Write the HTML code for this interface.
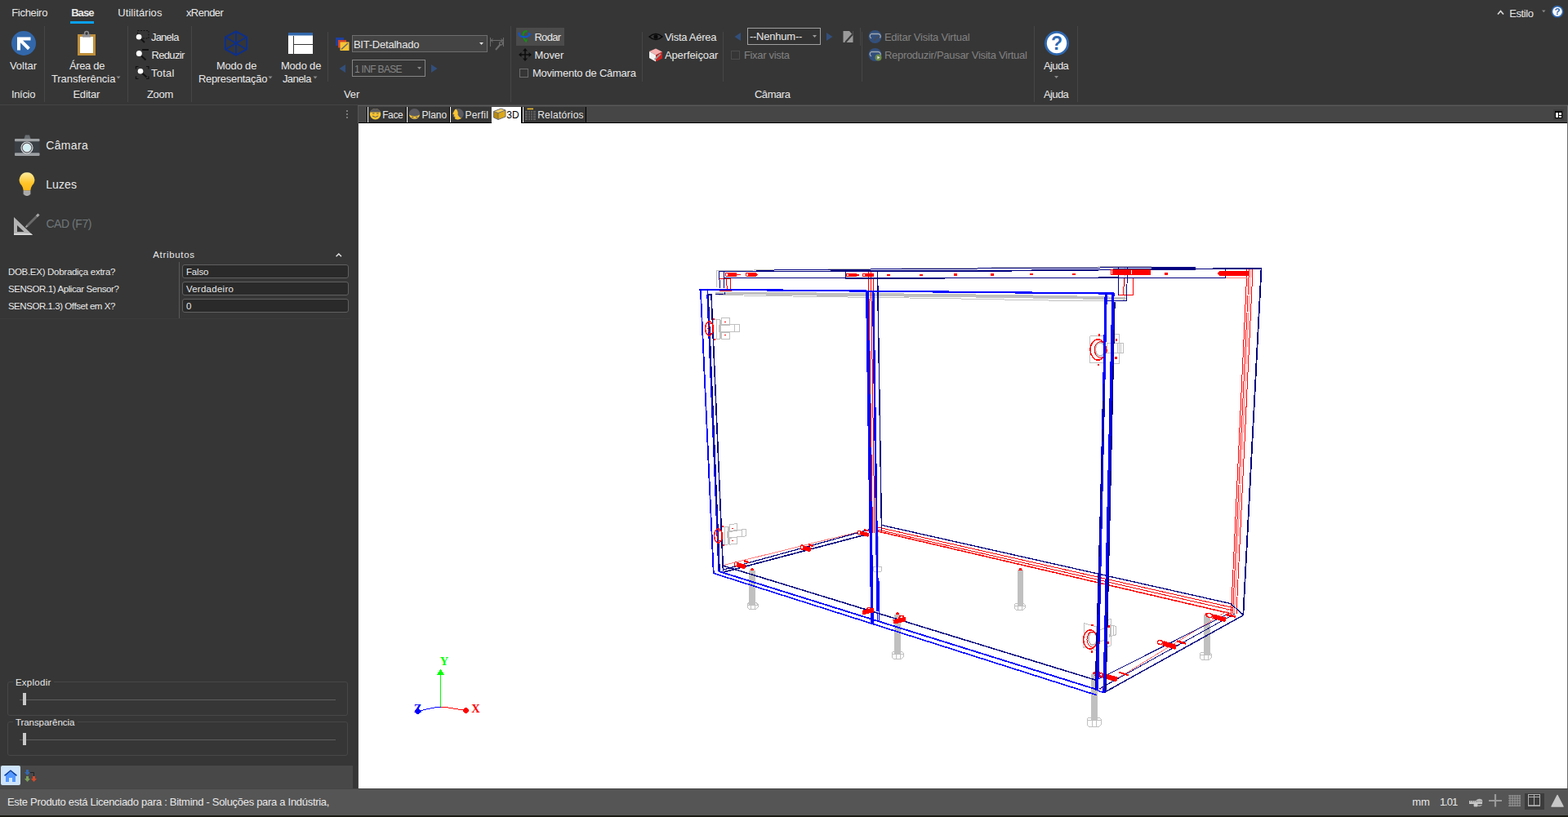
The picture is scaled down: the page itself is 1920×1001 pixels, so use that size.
<!DOCTYPE html>
<html lang="pt"><head><meta charset="utf-8"><title>BIT-Detalhado - 3D</title>
<style>
html,body{margin:0;padding:0;}
body{width:1920px;height:1001px;overflow:hidden;background:#363636;font-family:"Liberation Sans", sans-serif;font-size:13px;color:#e8e8e8;position:relative;}
.t{position:absolute;white-space:nowrap;line-height:1.25;height:1.25em;}
.a{position:absolute;}
.rg{position:absolute;left:0;top:0;width:0;height:0;}
.sep{position:absolute;width:1px;background:#464646;}
.inp{position:absolute;left:223px;width:202px;height:15px;border:1px solid #606060;border-radius:3px;background:#2a2a2a;}
.grp{position:absolute;left:9px;width:415px;height:40px;border:1px solid #474747;border-radius:3px;}
.track{position:absolute;left:24px;width:387px;height:1px;background:#5e5e5e;}
.thumb{position:absolute;left:28px;width:4px;height:15px;background:#c8c8c8;}
.tab{position:absolute;top:131px;height:19px;background:#363636;border-left:1px solid #fff;box-shadow:-1px 0 0 #000;}
</style></head>
<body>
<header id="ribbon" class="rg">
<div class="a" style="left:86px;top:26px;width:29px;height:3px;background:#0aa1ee"></div>
<div class="sep" style="left:54px;top:32px;height:93px"></div>
<div class="sep" style="left:156px;top:32px;height:93px"></div>
<div class="sep" style="left:234px;top:32px;height:93px"></div>
<div class="sep" style="left:401px;top:39px;height:61px"></div>
<div class="sep" style="left:625px;top:32px;height:93px"></div>
<div class="sep" style="left:786px;top:39px;height:61px"></div>
<div class="sep" style="left:885px;top:39px;height:61px"></div>
<div class="sep" style="left:1055px;top:39px;height:61px"></div>
<div class="sep" style="left:1266px;top:32px;height:93px"></div>
<div class="sep" style="left:1319px;top:32px;height:93px"></div>
<div class="a" style="left:632px;top:34px;width:59px;height:22px;background:#4b4b4b"></div>
<div class="a" style="left:431px;top:43px;width:164px;height:19px;border:1px solid #6e6e6e;background:#444"></div>
<div class="a" style="left:431px;top:73px;width:88px;height:19px;border:1px solid #858585;background:#363636"></div>
<div class="a" style="left:915px;top:34px;width:88px;height:19px;border:1px solid #a0a0a0;background:#333"></div>
<div class="a" style="left:636px;top:84px;width:9px;height:9px;border:1px solid #6c6c6c"></div>
<div class="a" style="left:895px;top:62px;width:9px;height:9px;border:1px solid #4c4c4c"></div>
<svg class="a" style="left:0px;top:0px" width="1920" height="128" viewBox="0 0 1920 128">
<circle cx="29" cy="53" r="15" fill="#3268ab"/>
<path d="M21 45.5 H37.5 V49.5 H28 L36.8 58.3 L34 61.2 L25 52.2 V61.5 H21 Z" fill="#fff"/>
<rect x="95" y="42" width="22" height="26" fill="#bf8f3a"/>
<rect x="98" y="45" width="16" height="20" fill="#fff"/>
<rect x="101" y="41.8" width="10" height="3.8" fill="#8e8e93"/><circle cx="106" cy="41" r="2.4" fill="#363636" stroke="#8e8e93" stroke-width="1.5"/>
<rect x="168.5" y="37.5" width="13.5" height="9.5" fill="none" stroke="#111" stroke-width="1" stroke-dasharray="2 1.5"/>
<path d="M172.5 47.5 L177 52" stroke="#111" stroke-width="2"/><circle cx="170.1" cy="45.3" r="3.3" fill="#fff"/>
<rect x="174" y="60" width="8" height="2" fill="#111"/>
<path d="M173 68.5 L178.5 73.5" stroke="#111" stroke-width="2"/><circle cx="170.3" cy="65.4" r="3.5" fill="#fff"/>
<path d="M166.5 84.5 V81.5 H169.5 M179 81.5 H182 V84.5 M182 93.5 V96.5 H179 M169.5 96.5 H166.5 V93.5" fill="none" stroke="#111" stroke-width="1.2"/>
<path d="M174 89.5 L179.5 94.5" stroke="#111" stroke-width="2"/><circle cx="172" cy="87.2" r="3.3" fill="#fff"/>
<path d="M289 38.5 L302 45.5 V60.5 L289 67.5 L276 60.5 V45.5 Z M289 38.5 V67.5 M276 45.5 L302 60.5 M302 45.5 L276 60.5" fill="none" stroke="#0c2f8c" stroke-width="2"/>
<rect x="353" y="40" width="30" height="26" fill="#fff"/><rect x="353" y="40" width="30" height="3.5" fill="#3268ab"/>
<path d="M359.5 43.5 V66 M359.5 54.5 H383" stroke="#363636" stroke-width="1" fill="none" shape-rendering="crispEdges"/>
<path d="M142.5 93.5 h5 l-2.5 3 z" fill="#8a8a8a"/>
<path d="M328.5 93.5 h5 l-2.5 3 z" fill="#8a8a8a"/>
<path d="M383.5 93.5 h5 l-2.5 3 z" fill="#8a8a8a"/>
<path d="M1291 93 h5 l-2.5 3 z" fill="#8a8a8a"/>
<rect x="411" y="46" width="10" height="10" fill="#1e3f9e"/><rect x="414" y="49" width="10" height="9.5" fill="#d1452a"/><rect x="416.5" y="51.5" width="11" height="10.5" fill="#f8c633"/>
<path d="M418 60.5 L426 53" stroke="#6b6b6b" stroke-width="1.6"/>
<path d="M587 52 h5 l-2.5 3 z" fill="#e0e0e0"/>
<path d="M511 82 h5 l-2.5 3 z" fill="#8a8a8a"/>
<path d="M995 43 h5 l-2.5 3 z" fill="#9a9a9a"/>
<path d="M600.5 46 V57 M616.5 46 V57 M601 49.5 H616 M603.5 47.5 L601 49.5 L603.5 51.5 M613.5 47.5 L616 49.5 L613.5 51.5" fill="none" stroke="#6c6c6c" stroke-width="1"/>
<path d="M607 61 L613 54" stroke="#6c6c6c" stroke-width="2"/><circle cx="613.5" cy="53" r="2" fill="none" stroke="#6c6c6c" stroke-width="1.2"/>
<polygon points="423 79 415.5 84 423 89" fill="#324f7c"/>
<polygon points="528 79 535.5 84 528 89" fill="#324f7c"/>
<polygon points="907 40 899.5 45 907 50" fill="#324f7c"/>
<polygon points="1012 40 1019.5 45 1012 50" fill="#324f7c"/>
<path d="M645.5 38.2 Q640.5 38.2 640.3 43 Q640.5 47.5 644 49.2" fill="none" stroke="#178c14" stroke-width="2.2"/><path d="M641.8 49.3 L646.2 47.8 L644.3 52.6 Z" fill="#178c14"/>
<path d="M636 39.8 Q634.5 45 641.5 45.3 Q647 45.2 648 42.8" fill="none" stroke="#0f55c8" stroke-width="2.2"/><path d="M646.5 39.6 L650.8 42 L647.5 44.4 Z" fill="#0f55c8"/>
<path d="M643 60 V74 M636 67 H650" stroke="#0e0e0e" stroke-width="1.6" fill="none"/>
<path d="M643 59 L646 62.5 H640 Z M643 75 L646 71.5 H640 Z M635 67 L638.5 64 V70 Z M651 67 L647.5 64 V70 Z" fill="#0e0e0e"/>
<path d="M795 45 Q803 38 811 45 Q803 52 795 45 Z" fill="none" stroke="#0a0a0a" stroke-width="1.5"/><circle cx="803" cy="45" r="2.6" fill="#0a0a0a"/>
<path d="M795 63 L803 59.5 L811 63.5 L803 67.5 Z" fill="#f4b0b0"/><path d="M795 63 L803 67.5 V75.5 L795 71 Z" fill="#f2f2f2"/><path d="M803 67.5 L811 63.5 V71.5 L803 75.5 Z" fill="#cc2020"/>
<path d="M801.5 73 L809 66" stroke="#9a9a9a" stroke-width="1.8"/>
<rect x="1032.5" y="38" width="12" height="14" fill="#9a9a9a"/><path d="M1035 52 L1044 42" stroke="#3a3a3a" stroke-width="2"/><path d="M1035 52 L1044 42" stroke="#9a9a9a" stroke-width="0" />
<path d="M1040 38 H1044.5 V43 Z" fill="#363636"/>
<rect x="1053" y="34" width="1" height="22" fill="#464646"/>
<circle cx="1071.5" cy="45" r="8" fill="#324f7c"/>
<path d="M1067 47 a3 3 0 0 1 0 -5.5 h8.5 a3 3 0 0 1 2 5" fill="none" stroke="#a0a8b0" stroke-width="1.3"/>
<circle cx="1071.5" cy="67" r="8" fill="#324f7c"/>
<path d="M1067 69 a3 3 0 0 1 0 -5.5 h8.5 a3 3 0 0 1 2 5" fill="none" stroke="#a0a8b0" stroke-width="1.3"/>
<path d="M1070 50 L1076 44" stroke="#4a4a4a" stroke-width="1.6"/>
<circle cx="1075.5" cy="70.5" r="4" fill="#6a8a4a"/><path d="M1074.3 68.5 L1077.6 70.5 L1074.3 72.5 Z" fill="#e0e0e0"/>
<circle cx="1294" cy="53" r="13.6" fill="#fff" stroke="#2f68b0" stroke-width="2.8"/>
<text x="1294" y="61" text-anchor="middle" font-family="Liberation Sans, sans-serif" font-weight="700" font-size="23" fill="#2f68b0">?</text>
<circle cx="1907" cy="14.2" r="6.6" fill="#fff" stroke="#2f68b0" stroke-width="1.6"/>
<text x="1907" y="18.3" text-anchor="middle" font-family="Liberation Sans, sans-serif" font-weight="700" font-size="11.5" fill="#2f68b0">?</text>
<path d="M1834 17.5 L1837.5 13.5 L1841 17.5" fill="none" stroke="#d8d8d8" stroke-width="1.7"/>
<path d="M1888 12.5 h4.5 l-2.25 2.7 z" fill="#8a8a8a"/>
</svg>
<span class="t" id="t0" style="left:14.2px;top:8.0px;font-size:13px;color:#e8e8e8;letter-spacing:-0.293px;">Ficheiro</span>
<span class="t" id="t1" style="left:87.2px;top:8.0px;font-size:13px;color:#e8e8e8;font-weight:700;letter-spacing:-0.959px;">Base</span>
<span class="t" id="t2" style="left:144.3px;top:8.0px;font-size:13px;color:#e8e8e8;letter-spacing:0.063px;">Utilitários</span>
<span class="t" id="t3" style="left:227.9px;top:8.0px;font-size:13px;color:#e8e8e8;letter-spacing:-0.523px;">xRender</span>
<span class="t" id="t4" style="left:1848.2px;top:9.0px;font-size:13px;color:#e8e8e8;letter-spacing:-0.379px;">Estilo</span>
<span class="t" id="t5" style="left:11.9px;top:73.0px;font-size:13px;color:#e8e8e8;letter-spacing:0.010px;">Voltar</span>
<span class="t" id="t6" style="left:84.9px;top:73.0px;font-size:13px;color:#e8e8e8;letter-spacing:-0.341px;">Área de</span>
<span class="t" id="t7" style="left:62.9px;top:89.0px;font-size:13px;color:#e8e8e8;letter-spacing:-0.042px;">Transferência</span>
<span class="t" id="t8" style="left:264.9px;top:73.0px;font-size:13px;color:#e8e8e8;letter-spacing:-0.182px;">Modo de</span>
<span class="t" id="t9" style="left:242.9px;top:89.0px;font-size:13px;color:#e8e8e8;letter-spacing:-0.306px;">Representação</span>
<span class="t" id="t10" style="left:343.9px;top:73.0px;font-size:13px;color:#e8e8e8;letter-spacing:-0.182px;">Modo de</span>
<span class="t" id="t11" style="left:345.9px;top:89.0px;font-size:13px;color:#e8e8e8;letter-spacing:-0.562px;">Janela</span>
<span class="t" id="t12" style="left:1277.9px;top:73.0px;font-size:13px;color:#e8e8e8;letter-spacing:-0.587px;">Ajuda</span>
<span class="t" id="t13" style="left:13.9px;top:108.0px;font-size:13px;color:#e8e8e8;letter-spacing:-0.316px;">Início</span>
<span class="t" id="t14" style="left:89.4px;top:108.0px;font-size:13px;color:#e8e8e8;letter-spacing:-0.194px;">Editar</span>
<span class="t" id="t15" style="left:179.9px;top:108.0px;font-size:13px;color:#e8e8e8;letter-spacing:-0.245px;">Zoom</span>
<span class="t" id="t16" style="left:420.9px;top:108.0px;font-size:13px;color:#e8e8e8;letter-spacing:-0.008px;">Ver</span>
<span class="t" id="t17" style="left:923.9px;top:108.0px;font-size:13px;color:#e8e8e8;letter-spacing:-0.430px;">Câmara</span>
<span class="t" id="t18" style="left:1277.9px;top:108.0px;font-size:13px;color:#e8e8e8;letter-spacing:-0.587px;">Ajuda</span>
<span class="t" id="t19" style="left:184.9px;top:38.0px;font-size:13px;color:#e8e8e8;letter-spacing:-0.762px;">Janela</span>
<span class="t" id="t20" style="left:185.4px;top:60.0px;font-size:13px;color:#e8e8e8;letter-spacing:-0.633px;">Reduzir</span>
<span class="t" id="t21" style="left:184.9px;top:82.0px;font-size:13px;color:#e8e8e8;letter-spacing:0.258px;">Total</span>
<span class="t" id="t22" style="left:432.9px;top:47.0px;font-size:13px;color:#e8e8e8;letter-spacing:-0.217px;">BIT-Detalhado</span>
<span class="t" id="t23" style="left:433.9px;top:77.5px;font-size:12px;color:#858585;letter-spacing:-0.665px;">1 INF BASE</span>
<span class="t" id="t24" style="left:654.4px;top:38.0px;font-size:13px;color:#e8e8e8;letter-spacing:-0.680px;">Rodar</span>
<span class="t" id="t25" style="left:654.4px;top:60.0px;font-size:13px;color:#e8e8e8;letter-spacing:-0.031px;">Mover</span>
<span class="t" id="t26" style="left:651.9px;top:82.0px;font-size:13px;color:#e8e8e8;letter-spacing:-0.250px;">Movimento de Câmara</span>
<span class="t" id="t27" style="left:813.9px;top:38.0px;font-size:13px;color:#e8e8e8;letter-spacing:-0.277px;">Vista Aérea</span>
<span class="t" id="t28" style="left:813.9px;top:60.0px;font-size:13px;color:#e8e8e8;letter-spacing:-0.098px;">Aperfeiçoar</span>
<span class="t" id="t29" style="left:917.9px;top:37.0px;font-size:13px;color:#e8e8e8;letter-spacing:-0.219px;">--Nenhum--</span>
<span class="t" id="t30" style="left:910.9px;top:60.0px;font-size:13px;color:#828282;letter-spacing:-0.313px;">Fixar vista</span>
<span class="t" id="t31" style="left:1082.9px;top:38.0px;font-size:13px;color:#828282;letter-spacing:-0.228px;">Editar Visita Virtual</span>
<span class="t" id="t32" style="left:1082.9px;top:60.0px;font-size:13px;color:#828282;letter-spacing:-0.286px;">Reproduzir/Pausar Visita Virtual</span>
</header>
<nav id="view-tabs" class="rg">
<div class="a" style="left:438px;top:129px;width:1482px;height:22px;background:#464646"></div>
<div class="a" style="left:438px;top:129px;width:1px;height:22px;background:#555"></div>
<div class="a" style="left:438px;top:129px;width:1482px;height:1px;background:#5a5a5a"></div>
<div class="a" style="left:439px;top:150px;width:1481px;height:1px;background:#000"></div>
<div class="tab" style="left:450px;top:131px;width:46px"></div>
<div class="tab" style="left:498px;top:131px;width:51px"></div>
<div class="tab" style="left:551px;top:131px;width:49px"></div>
<div class="tab" style="left:640px;top:131px;width:76px"></div>
<div class="a" style="left:602px;top:131px;width:36px;height:20px;background:#fff;border-right:2px solid #000;box-sizing:content-box"></div>
<div class="a" style="left:717px;top:131px;width:1px;height:19px;background:#000"></div>
<svg class="a" style="left:1902px;top:134px" width="13" height="13" viewBox="0 0 13 13" shape-rendering="crispEdges"><rect width="13" height="13" fill="#3e3e3e"/><rect x="2" y="2" width="9" height="9" fill="#000"/><rect x="3" y="4" width="3" height="6" fill="#fff"/><rect x="7" y="4" width="3" height="3" fill="#fff"/><rect x="7" y="8" width="3" height="2" fill="#fff"/></svg>
<div class="a" style="left:1919px;top:129px;width:1px;height:22px;background:#6a6a6a"></div>
<svg class="a" style="left:438px;top:129px" width="1482" height="22" viewBox="438 129 1482 22">
<circle cx="459.6" cy="139.8" r="6.7" fill="#fbc530"/><path d="M453.3 137.5 A6.7 6.7 0 0 1 465.9 137.5 Z" fill="#5a5a60"/>
<path d="M456 142 Q459.6 145 463.2 142" fill="none" stroke="#5a5a60" stroke-width="1"/><path d="M456 139 h2.5 M461 139 h2.5" stroke="#5a5a60" stroke-width="1"/>
<circle cx="507.5" cy="139.8" r="6.7" fill="#5a5a60"/><path d="M501 140.5 Q507.5 144.5 514 140.5 A6.7 6.7 0 0 1 501 140.5 Z" fill="#fbc530"/>
<path d="M504 143.5 h2.5 M509 143.5 h2.5" stroke="#5a5a60" stroke-width="1"/>
<circle cx="561" cy="139.8" r="6.7" fill="#5a5a60"/><path d="M558.5 133.6 Q561.5 137 560.5 140.5 Q562 144 565 145 Q561 147.5 557 145.5 L557.5 143 L555.5 142.5 L556.5 140.5 L554.3 139.5 L556.3 136 Q556.5 134 558.5 133.6 Z" fill="#fbc530"/>
<path d="M604.5 136.5 L613.5 133 L619 135 L610 138.5 Z" fill="#f5d060"/><path d="M604.5 136.5 L610 138.5 V146.5 L604.5 144 Z" fill="#b88a10"/><path d="M610 138.5 L619 135 V143 L610 146.5 Z" fill="#dca818"/>
<path d="M604.5 136.5 L613.5 133 L619 135 V143 L610 146.5 L604.5 144 Z M610 138.5 V146.5 M610 138.5 L619 135 M610 138.5 L604.5 136.5" fill="none" stroke="#6e6e78" stroke-width="1"/>
<rect x="645.5" y="132.6" width="7.5" height="1.6" fill="#f0bc30"/>
<path d="M643 136.5 h2.5 M647 136.5 h2 M650 136.5 h2 M653 136.5 h3 M643 138.5 h2.5 M647 138.5 h2 M650 138.5 h2 M653 138.5 h3 M643 140.5 h2.5 M647 140.5 h2 M650 140.5 h2 M653 140.5 h3 M643 142.5 h2.5 M647 142.5 h2 M650 142.5 h2 M653 142.5 h3 M643 144.5 h2.5 M647 144.5 h2 M650 144.5 h2 M653 144.5 h3 M643 146.5 h2.5 M647 146.5 h2 M650 146.5 h2 M653 146.5 h3" stroke="#707070" stroke-width="1" fill="none" shape-rendering="crispEdges"/>
</svg>
<span class="t" id="t33" style="left:468.2px;top:134.0px;font-size:12px;color:#e8e8e8;letter-spacing:-0.396px;">Face</span>
<span class="t" id="t34" style="left:516.6px;top:134.0px;font-size:12px;color:#e8e8e8;letter-spacing:-0.051px;">Plano</span>
<span class="t" id="t35" style="left:569.4px;top:134.0px;font-size:12px;color:#e8e8e8;letter-spacing:0.231px;">Perfil</span>
<span class="t" id="t36" style="left:620.2px;top:134.0px;font-size:12px;color:#000;letter-spacing:0.156px;">3D</span>
<span class="t" id="t37" style="left:658.2px;top:134.0px;font-size:12px;color:#e8e8e8;letter-spacing:0.263px;">Relatórios</span>
</nav>
<aside id="side-panel" class="rg">
<div class="a" style="left:0;top:128px;width:1920px;height:1px;background:#454545"></div>
<div class="a" style="left:438px;top:151px;width:1px;height:816px;background:#4a4a4a"></div>
<div class="a" style="left:424px;top:135px;width:2px;height:2px;background:#7a7a7a"></div>
<div class="a" style="left:424px;top:139px;width:2px;height:2px;background:#7a7a7a"></div>
<div class="a" style="left:424px;top:143px;width:2px;height:2px;background:#7a7a7a"></div>
<div class="inp" style="top:324px"></div>
<div class="inp" style="top:345px"></div>
<div class="inp" style="top:366px"></div>
<div class="sep" style="left:219px;top:321px;height:69px;background:#5a5a5a"></div>
<div class="a" style="left:0;top:390px;width:429px;height:1px;background:#3b3b3b"></div>
<div class="a" style="left:435px;top:152px;width:3px;height:786px;background:#343434"></div>
<svg class="a" style="left:410px;top:308px" width="10" height="8" viewBox="0 0 10 8"><path d="M1.6 6.3 L4.8 3 L8 6.3" fill="none" stroke="#e4e4e4" stroke-width="1.4"/></svg>
<div class="grp" style="top:835px"></div>
<div class="grp" style="top:884px"></div>
<div class="a" style="left:16px;top:830px;width:50px;height:12px;background:#363636"></div>
<div class="a" style="left:16px;top:879px;width:79px;height:12px;background:#363636"></div>
<div class="track" style="top:857px"></div><div class="thumb" style="top:849px"></div>
<div class="track" style="top:906px"></div><div class="thumb" style="top:898px"></div>
<div class="a" style="left:0;top:938px;width:432px;height:28px;background:#484848"></div>
<div class="a" style="left:1px;top:938px;width:24px;height:24px;background:#cde4fb;border-radius:2px"></div>
<svg class="a" style="left:0px;top:152px" width="438" height="815" viewBox="0 152 438 815">
<rect x="18" y="170" width="30.5" height="21" rx="1.5" fill="#3a3f45"/><rect x="18" y="170" width="30.5" height="3.2" rx="1" fill="#9da0a3"/><rect x="18" y="187.3" width="30.5" height="3.7" rx="1" fill="#9da0a3"/>
<path d="M29.5 170 L31 165.5 H36 L37.5 170 Z" fill="#6a6f74"/>
<circle cx="33" cy="181" r="7" fill="#50565c" stroke="#d8dadc" stroke-width="1.2"/><circle cx="33" cy="181" r="4.8" fill="#d4f0f4" stroke="#f4f4f4" stroke-width="1"/>
<defs><linearGradient id="bg1" x1="0" y1="0" x2="0" y2="1"><stop offset="0" stop-color="#ffeea0"/><stop offset="0.6" stop-color="#ffc428"/><stop offset="1" stop-color="#fbb818"/></linearGradient></defs>
<path d="M33 211.2 A9.2 9.2 0 0 1 39.5 227 Q37.5 230 37.3 233.5 H28.7 Q28.5 230 26.5 227 A9.2 9.2 0 0 1 33 211.2 Z" fill="url(#bg1)"/>
<path d="M28.7 233.5 H37.3 V238 Q33 242 28.7 238 Z" fill="#b8b8b8"/><path d="M28.7 235.5 H37.3 M28.7 237.5 H37.3" stroke="#8c8c8c" stroke-width="0.7"/>
<path d="M17 266 V288 H40 Z M21 276 V284 H29.5 Z" fill="#b4b4b4" fill-rule="evenodd"/><path d="M17 288 H40 L38 286 H17 Z" fill="#d8d8d8"/>
<path d="M33 277 L45.5 264.5" stroke="#6a6a6a" stroke-width="3"/><path d="M45 265 L47.5 262.5" stroke="#a8a8a8" stroke-width="3"/><path d="M31.5 278.5 L33.5 276.5" stroke="#9a9a9a" stroke-width="2"/>
<rect x="7" y="948" width="12" height="10" fill="#5599ff"/><path d="M6.5 950.5 L13 945 L19.5 950.5 V948.5 L13 945 Z" fill="#5599ff"/><path d="M7 950 L13 945.2 L19 950 Z" fill="#5599ff"/><rect x="11" y="953" width="4" height="5" fill="#cfe8ff"/>
<path d="M5.5 950.3 L13 944.2 L20.5 950.3" fill="none" stroke="#0b3fa0" stroke-width="1.5"/>
<path d="M36 946.5 H41.5 V951" fill="none" stroke="#222" stroke-width="1"/>
<path d="M32 943 h3 v3 h2 l-3.5 4 l-3.5 -4 h2 z" fill="#3568b0"/>
<path d="M32 951 h3 v3 h2 l-3.5 4 l-3.5 -4 h2 z" fill="#7a9e5c"/>
<path d="M40 951 h3 v3 h2 l-3.5 4 l-3.5 -4 h2 z" fill="#d4492a"/>
</svg>
<span class="t" id="t38" style="left:56.2px;top:170.0px;font-size:14px;color:#e8e8e8;letter-spacing:0.341px;">Câmara</span>
<span class="t" id="t39" style="left:56.2px;top:218.0px;font-size:14px;color:#e8e8e8;letter-spacing:0.085px;">Luzes</span>
<span class="t" id="t40" style="left:56.4px;top:266.0px;font-size:14px;color:#70767a;letter-spacing:-0.446px;">CAD (F7)</span>
<span class="t" id="t41" style="left:187.2px;top:304.5px;font-size:11.5px;color:#e8e8e8;letter-spacing:0.676px;">Atributos</span>
<span class="t" id="t42" style="left:9.9px;top:325.5px;font-size:11.5px;color:#e8e8e8;letter-spacing:-0.285px;">DOB.EX) Dobradiça extra?</span>
<span class="t" id="t43" style="left:9.9px;top:346.5px;font-size:11.5px;color:#e8e8e8;letter-spacing:-0.406px;">SENSOR.1) Aplicar Sensor?</span>
<span class="t" id="t44" style="left:9.9px;top:367.5px;font-size:11.5px;color:#e8e8e8;letter-spacing:-0.443px;">SENSOR.1.3) Offset em X?</span>
<span class="t" id="t45" style="left:227.9px;top:325.5px;font-size:11.5px;color:#e8e8e8;letter-spacing:-0.156px;">Falso</span>
<span class="t" id="t46" style="left:227.9px;top:346.5px;font-size:11.5px;color:#e8e8e8;letter-spacing:0.264px;">Verdadeiro</span>
<span class="t" id="t47" style="left:227.9px;top:367.5px;font-size:11.5px;color:#e8e8e8;">0</span>
<span class="t" id="t48" style="left:18.9px;top:828.5px;font-size:11.5px;color:#e8e8e8;letter-spacing:0.277px;">Explodir</span>
<span class="t" id="t49" style="left:18.9px;top:877.5px;font-size:11.5px;color:#e8e8e8;letter-spacing:-0.049px;">Transparência</span>
</aside>
<main id="viewport" class="rg">
<div class="a" style="left:439px;top:151px;width:1480px;height:815px;background:#fff"></div>
<div class="a" style="left:1919px;top:151px;width:1px;height:816px;background:#6a6a6a"></div>
<svg class="a" style="left:439px;top:151px" width="1480" height="815" viewBox="439 151 1480 815" shape-rendering="crispEdges">
<style>.ax{font-family:"Liberation Serif",serif;font-weight:700;font-size:14.5px;text-anchor:middle}</style>
<rect x="917" y="699" width="7.5" height="41" fill="#c0c0c0"/>
<path d="M917 738.5 L926 738.5 L928 740.5 L928 744 L926 746 L917 746 L915 744 L915 740.5 L917 738.5" stroke="#c0c0c0" stroke-width="1" fill="none"/>
<path d="M919.5 741.5 L919.5 746" stroke="#c0c0c0" stroke-width="1" fill="none"/>
<path d="M924.5 741.5 L924.5 746" stroke="#c0c0c0" stroke-width="1" fill="none"/>
<path d="M915 741.5 L928 741.5" stroke="#c0c0c0" stroke-width="1" fill="none"/>
<rect x="917" y="737.5" width="7.5" height="4" fill="#c0c0c0"/>
<path d="M918.25 699 L919.75 696 L921.75 696 L923.25 699Z" fill="#ff0000"/>
<rect x="1095" y="753" width="8" height="47" fill="#c0c0c0"/>
<path d="M1094 798 L1104 798 L1106 800 L1106 805 L1104 807 L1094 807 L1092 805 L1092 800 L1094 798" stroke="#c0c0c0" stroke-width="1" fill="none"/>
<path d="M1097 801 L1097 807" stroke="#c0c0c0" stroke-width="1" fill="none"/>
<path d="M1102 801 L1102 807" stroke="#c0c0c0" stroke-width="1" fill="none"/>
<path d="M1092 801 L1106 801" stroke="#c0c0c0" stroke-width="1" fill="none"/>
<rect x="1095" y="797" width="8" height="4" fill="#c0c0c0"/>
<path d="M1096.5 753 L1098 750 L1100 750 L1101.5 753Z" fill="#ff0000"/>
<rect x="1246" y="699" width="6.5" height="42" fill="#c0c0c0"/>
<path d="M1244 739 L1253 739 L1255 741 L1255 745 L1253 747 L1244 747 L1242 745 L1242 741 L1244 739" stroke="#c0c0c0" stroke-width="1" fill="none"/>
<path d="M1246.5 742 L1246.5 747" stroke="#c0c0c0" stroke-width="1" fill="none"/>
<path d="M1251.5 742 L1251.5 747" stroke="#c0c0c0" stroke-width="1" fill="none"/>
<path d="M1242 742 L1255 742" stroke="#c0c0c0" stroke-width="1" fill="none"/>
<rect x="1246" y="738" width="6.5" height="4" fill="#c0c0c0"/>
<path d="M1246.75 699 L1248.25 696 L1250.25 696 L1251.75 699Z" fill="#ff0000"/>
<rect x="1336" y="826" width="8" height="55" fill="#c0c0c0"/>
<path d="M1333 879 L1346 879 L1348 881 L1348 888 L1346 890 L1333 890 L1331 888 L1331 881 L1333 879" stroke="#c0c0c0" stroke-width="1" fill="none"/>
<path d="M1337.5 882 L1337.5 890" stroke="#c0c0c0" stroke-width="1" fill="none"/>
<path d="M1342.5 882 L1342.5 890" stroke="#c0c0c0" stroke-width="1" fill="none"/>
<path d="M1331 882 L1348 882" stroke="#c0c0c0" stroke-width="1" fill="none"/>
<rect x="1336" y="878" width="8" height="4" fill="#c0c0c0"/>
<path d="M1337.5 826 L1339 823 L1341 823 L1342.5 826Z" fill="#ff0000"/>
<rect x="1473.5" y="753.5" width="8" height="47.5" fill="#c0c0c0"/>
<path d="M1471 799 L1481 799 L1483 801 L1483 806 L1481 808 L1471 808 L1469 806 L1469 801 L1471 799" stroke="#c0c0c0" stroke-width="1" fill="none"/>
<path d="M1474 802 L1474 808" stroke="#c0c0c0" stroke-width="1" fill="none"/>
<path d="M1479 802 L1479 808" stroke="#c0c0c0" stroke-width="1" fill="none"/>
<path d="M1469 802 L1483 802" stroke="#c0c0c0" stroke-width="1" fill="none"/>
<rect x="1473.5" y="798" width="8" height="4" fill="#c0c0c0"/>
<path d="M1475 753.5 L1476.5 750.5 L1478.5 750.5 L1480 753.5Z" fill="#ff0000"/>
<path d="M1072.5 657 L1072.5 694" stroke="#c0c0c0" stroke-width="1" fill="none"/>
<path d="M1075.5 657 L1075.5 694" stroke="#c0c0c0" stroke-width="1" fill="none"/>
<path d="M1070 694 L1079 694 L1080 696 L1079 700 L1070 700 L1069.5 696 L1070 694" stroke="#c0c0c0" stroke-width="1" fill="none"/>
<path d="M876 357.5 L1000 358.5 L1160 360 L1300 362 L1377 364 L1377 367.5 L1300 366 L1160 364 L1000 362.5 L876 360.5Z" fill="#c0c0c0"/>
<path d="M880 361.5 L1000 363.5 L1150 365.5 L1310 368.5 L1353 368.5" stroke="#c0c0c0" stroke-width="1" fill="none"/>
<path d="M877.5 352 L877.5 331.5 L1150 328.5 L1410 326.5" stroke="#c0c0c0" stroke-width="1" fill="none"/>
<path d="M1377.5 326.5 L1377.5 367" stroke="#c0c0c0" stroke-width="1" fill="none"/>
<path d="M1374 368.5 L1379 365.5" stroke="#c0c0c0" stroke-width="1" fill="none"/>
<path d="M873 391.5 L881 391.5 L881 415 L873 415 L873 391.5" stroke="#c0c0c0" stroke-width="1" fill="none"/>
<path d="M883.5 389 L893 389 L893 398.5 L883.5 398.5 L883.5 389" stroke="#c0c0c0" stroke-width="1" fill="none"/>
<path d="M883.5 407 L893.5 407 L893.5 415.5 L883.5 415.5 L883.5 407" stroke="#c0c0c0" stroke-width="1" fill="none"/>
<path d="M881 397.5 L905 397.5 L905 406.5 L881 406.5 L881 397.5" stroke="#c0c0c0" stroke-width="1" fill="none"/>
<path d="M899.5 397.5 L905 397.5 L905 406.5 L899.5 406.5 L899.5 397.5" stroke="#c0c0c0" stroke-width="1" fill="none"/>
<path d="M877.5 391.5 L877.5 415" stroke="#c0c0c0" stroke-width="1" fill="none"/>
<path d="M880 397.5 L880 406.5" stroke="#c0c0c0" stroke-width="1" fill="none"/>
<path d="M882 391.5 L882 415" stroke="#c0c0c0" stroke-width="1" fill="none"/>
<path d="M883.685 645.851 L891.125 645.107 L891.125 666.962 L883.685 667.707 L883.685 645.851" stroke="#c0c0c0" stroke-width="1" fill="none"/>
<path d="M893.45 642.55 L902.285 641.667 L902.285 650.501 L893.45 651.385 L893.45 642.55" stroke="#c0c0c0" stroke-width="1" fill="none"/>
<path d="M893.45 659.29 L902.75 658.36 L902.75 666.265 L893.45 667.195 L893.45 659.29" stroke="#c0c0c0" stroke-width="1" fill="none"/>
<path d="M891.125 650.688 L913.445 648.456 L913.445 656.826 L891.125 659.058 L891.125 650.688" stroke="#c0c0c0" stroke-width="1" fill="none"/>
<path d="M908.33 648.967 L913.445 648.456 L913.445 656.826 L908.33 657.337 L908.33 648.967" stroke="#c0c0c0" stroke-width="1" fill="none"/>
<path d="M887.87 645.433 L887.87 667.288" stroke="#c0c0c0" stroke-width="1" fill="none"/>
<path d="M890.195 650.78 L890.195 659.15" stroke="#c0c0c0" stroke-width="1" fill="none"/>
<path d="M892.055 645.014 L892.055 666.87" stroke="#c0c0c0" stroke-width="1" fill="none"/>
<path d="M1334.5 411.5 L1352 411.5 L1352 444.5 L1334.5 444.5 L1334.5 411.5" stroke="#c0c0c0" stroke-width="1" fill="none"/>
<path d="M1360 409.5 L1370.5 409.5 L1370.5 445 L1360 445 L1360 409.5" stroke="#c0c0c0" stroke-width="1" fill="none"/>
<path d="M1355 420.5 L1375.5 420.5 L1375.5 432.5 L1355 432.5 L1355 420.5" stroke="#c0c0c0" stroke-width="1" fill="none"/>
<path d="M1368.5 420.5 L1368.5 432.5" stroke="#c0c0c0" stroke-width="1" fill="none"/>
<path d="M1372 420.5 L1372 432.5" stroke="#c0c0c0" stroke-width="1" fill="none"/>
<ellipse cx="1347" cy="428" rx="5.7" ry="8.125" fill="none" stroke="#c0c0c0" stroke-width="2"/>
<ellipse cx="1344.5" cy="428.5" rx="9.5" ry="12.5" fill="none" stroke="#ff0000" stroke-width="1.5"/>
<ellipse cx="1347.5" cy="428.5" rx="7.125" ry="10" fill="none" stroke="#ff0000" stroke-width="1"/>
<rect x="1345" y="409" width="2" height="3" fill="#ff0000"/>
<rect x="1366" y="415" width="2" height="3" fill="#ff0000"/>
<rect x="1354.75" y="428" width="1.5" height="3" fill="#ff0000"/>
<rect x="1364.5" y="437" width="3" height="3" fill="#ff0000"/>
<rect x="1344" y="446" width="2" height="2" fill="#ff0000"/>
<path d="M1327.1 763.5 L1342.7 768 L1342 796.4 L1327 793.1 L1327.1 763.5" stroke="#c0c0c0" stroke-width="1" fill="none"/>
<path d="M1355 760.2 L1360.6 758.1 L1360.6 790.7 L1355 793.7 L1355 760.2" stroke="#c0c0c0" stroke-width="1" fill="none"/>
<path d="M1359.1 765.6 L1366.3 767.4 L1366 777.9 L1359 780 L1359.1 765.6" stroke="#c0c0c0" stroke-width="1" fill="none"/>
<path d="M1363 766.5 L1363 779" stroke="#c0c0c0" stroke-width="1" fill="none"/>
<path d="M1347 772 L1355 768.5" stroke="#c0c0c0" stroke-width="1" fill="none"/>
<path d="M1347 786 L1355 783" stroke="#c0c0c0" stroke-width="1" fill="none"/>
<ellipse cx="1338" cy="782.5" rx="5" ry="8" fill="none" stroke="#c0c0c0" stroke-width="2"/>
<ellipse cx="1335" cy="783.5" rx="8.5" ry="11.5" fill="none" stroke="#ff0000" stroke-width="1.5"/>
<ellipse cx="1337.5" cy="783.5" rx="6.5" ry="9.5" fill="none" stroke="#ff0000" stroke-width="1"/>
<rect x="1336" y="765" width="3" height="2" fill="#ff0000"/>
<rect x="1356" y="766.25" width="3" height="2.5" fill="#ff0000"/>
<rect x="1356" y="785.5" width="2" height="3" fill="#ff0000"/>
<rect x="1346" y="785" width="1" height="4" fill="#ff0000"/>
<rect x="1336" y="796.5" width="2" height="3" fill="#ff0000"/>
<path d="M1527 330 L1507.5 752" stroke="#ff0000" stroke-width="1" fill="none"/>
<path d="M1529.5 330 L1509.5 752" stroke="#ff0000" stroke-width="1" fill="none"/>
<path d="M1531.5 330 L1511.5 752" stroke="#ff8080" stroke-width="1" fill="none"/>
<path d="M1534 330 L1514 752" stroke="#ff0000" stroke-width="1" fill="none"/>
<path d="M1075 646 L1510 744.6" stroke="#ff0000" stroke-width="1" fill="none"/>
<path d="M1075 649 L1510 748" stroke="#ff0000" stroke-width="1" fill="none"/>
<path d="M1075 651 L1508 752" stroke="#ff0000" stroke-width="1.5" fill="none"/>
<path d="M1063.5 333 L1068.5 653" stroke="#ff0000" stroke-width="1" fill="none"/>
<path d="M1066.5 333 L1071 653" stroke="#ff0000" stroke-width="1" fill="none"/>
<path d="M1069 341 L1070 420" stroke="#ff0000" stroke-width="1" fill="none"/>
<path d="M880 341.3 L895 341.3" stroke="#ff0000" stroke-width="1" fill="none"/>
<path d="M889 341 L890.5 354" stroke="#ff0000" stroke-width="1" fill="none"/>
<path d="M894.5 341 L894.5 354" stroke="#ff0000" stroke-width="1" fill="none"/>
<rect x="881" y="354" width="15" height="3" fill="#ff0000"/>
<path d="M1369 340.5 L1387.5 340.5 L1387.5 361.5 L1369 361.5" stroke="#ff0000" stroke-width="1" fill="none"/>
<path d="M1376.5 340.5 L1375.5 361.5" stroke="#ff0000" stroke-width="1" fill="none"/>
<path d="M1387 340.5 L1405 340.5" stroke="#ff8080" stroke-width="1" fill="none"/>
<path d="M1501 340.5 L1527 340.5" stroke="#ff8080" stroke-width="1" fill="none"/>
<path d="M886 692.5 L1050 652" stroke="#ff8080" stroke-width="1" fill="none"/>
<path d="M1507 746 L1346 845" stroke="#ff8080" stroke-width="1" fill="none"/>
<path d="M880.5 332.5 L1160 332.3 L1310 331 L1400 330 L1545 329" stroke="#000080" stroke-width="1.8" fill="none"/>
<path d="M926 331.2 L1150 329.3 L1310 328.3 L1410 327.5" stroke="#000080" stroke-width="1" fill="none"/>
<rect x="1410" y="327" width="54" height="3.5" fill="#000080"/>
<path d="M886.5 340.5 L1501 340.5" stroke="#000080" stroke-width="1" fill="none"/>
<path d="M1035 341.3 L1157 341.3" stroke="#000080" stroke-width="1.5" fill="none"/>
<path d="M1345 340 L1369 340" stroke="#000080" stroke-width="1.5" fill="none"/>
<path d="M880.5 332.5 L881.5 353" stroke="#000080" stroke-width="1" fill="none"/>
<path d="M886.5 332.5 L887 353" stroke="#000080" stroke-width="1" fill="none"/>
<path d="M1035 333 L1035 341" stroke="#000080" stroke-width="1" fill="none"/>
<path d="M1074.5 333 L1079.5 650" stroke="#000080" stroke-width="1.5" fill="none"/>
<path d="M1369 328 L1369 362" stroke="#000080" stroke-width="1" fill="none"/>
<path d="M1380.5 327 L1379.5 369" stroke="#000080" stroke-width="1" fill="none"/>
<path d="M1356 368.5 L1380 368.5" stroke="#000080" stroke-width="1.5" fill="none"/>
<path d="M1500.5 330 L1500.5 340.5" stroke="#000080" stroke-width="1" fill="none"/>
<path d="M1544.5 329 L1522.3 753.5" stroke="#000080" stroke-width="1.8" fill="none"/>
<path d="M1080 643.5 L1507 739.6 L1522.5 753.5" stroke="#000080" stroke-width="1.3" fill="none"/>
<path d="M1522 754 L1352 848.5" stroke="#000080" stroke-width="1.5" fill="none"/>
<path d="M1512 752 L1346 844" stroke="#000080" stroke-width="1" fill="none"/>
<path d="M1502 753 L1345 832" stroke="#000080" stroke-width="1" fill="none"/>
<path d="M885 693 L1341 833" stroke="#000080" stroke-width="1.5" fill="none"/>
<path d="M886 698 L1064 649" stroke="#000080" stroke-width="1.2" fill="none"/>
<path d="M886 701 L1064 654" stroke="#000080" stroke-width="1.6" fill="none"/>
<path d="M867.2 361 L881.2 700" stroke="#000080" stroke-width="1.4" fill="none"/>
<path d="M866 361 L880 700" stroke="#0000ff" stroke-width="1.4" fill="none"/>
<path d="M871 361 L885.5 700" stroke="#000080" stroke-width="1.6" fill="none"/>
<path d="M865.5 361 L871.5 361" stroke="#000080" stroke-width="1.5" fill="none"/>
<path d="M876 360.5 L886 360.5" stroke="#000080" stroke-width="1.5" fill="none"/>
<path d="M887.5 358 L887.5 361" stroke="#000080" stroke-width="1" fill="none"/>
<path d="M1341 825 L1368 832.5" stroke="#ff0000" stroke-width="6" fill="none" stroke-linecap="butt"/>
<ellipse cx="1348.5" cy="826.5" rx="1.5" ry="2.5" fill="#fff" stroke="#ff0000" stroke-width="1"/>
<path d="M856.5 354.6 L1364.5 359.6" stroke="#0000ff" stroke-width="2.2" fill="none"/>
<path d="M857.8 354 L873.8 703" stroke="#0000ff" stroke-width="1.8" fill="none"/>
<path d="M866 355 L866 361" stroke="#0000ff" stroke-width="1" fill="none"/>
<path d="M873.5 702.3 L1343 851.7" stroke="#0000ff" stroke-width="1.6" fill="none"/>
<path d="M880 700 L1343 844.8" stroke="#0000ff" stroke-width="1.8" fill="none"/>
<path d="M1061.8 357 L1068 764" stroke="#0000ff" stroke-width="3.6" fill="none"/>
<path d="M1069.2 357 L1074.8 749" stroke="#0000ff" stroke-width="2.6" fill="none"/>
<path d="M1074 749 L1074.3 762" stroke="#0000ff" stroke-width="1" fill="none"/>
<path d="M1076.5 712 L1076.7 762" stroke="#0000ff" stroke-width="1" fill="none"/>
<path d="M1354.2 360 L1343.6 846" stroke="#0000ff" stroke-width="3.2" fill="none"/>
<path d="M1363 359 L1352 848" stroke="#0000ff" stroke-width="3.2" fill="none"/>
<path d="M1365 370 L1354 846" stroke="#000080" stroke-width="1.4" fill="none"/>
<path d="M1351.8 470 L1341.2 846" stroke="#000080" stroke-width="1.4" fill="none"/>
<path d="M1344 846 L1352 849" stroke="#0000ff" stroke-width="1.2" fill="none"/>
<path d="M890 336.4 L902 336.4" stroke="#ff0000" stroke-width="4.2" fill="none" stroke-linecap="butt"/>
<ellipse cx="890" cy="336.4" rx="1.6" ry="2.1" fill="#fff" stroke="#ff0000" stroke-width="1"/>
<path d="M902 336.4 L907 336.4" stroke="#ff0000" stroke-width="1.6" fill="none"/>
<path d="M915 336.4 L926 336.4" stroke="#ff0000" stroke-width="4.2" fill="none" stroke-linecap="butt"/>
<ellipse cx="915" cy="336.4" rx="1.6" ry="2.1" fill="#fff" stroke="#ff0000" stroke-width="1"/>
<path d="M926 334.3 L928.5 336.4 L926 338.5Z" fill="#ff0000"/>
<path d="M1038 337 L1049 337" stroke="#ff0000" stroke-width="3.6" fill="none" stroke-linecap="butt"/>
<ellipse cx="1038" cy="337" rx="1.6" ry="1.8" fill="#fff" stroke="#ff0000" stroke-width="1"/>
<path d="M1049 337 L1052 337" stroke="#ff0000" stroke-width="1.6" fill="none"/>
<path d="M1058 337 L1070 337" stroke="#ff0000" stroke-width="3.6" fill="none" stroke-linecap="butt"/>
<ellipse cx="1058" cy="337" rx="1.6" ry="1.8" fill="#fff" stroke="#ff0000" stroke-width="1"/>
<rect x="1086" y="335.8" width="4" height="2.4" fill="#ff0000"/>
<rect x="1126" y="335.8" width="4" height="2.4" fill="#ff0000"/>
<rect x="1168" y="335.3" width="4" height="2.4" fill="#ff0000"/>
<rect x="1213" y="335.3" width="4" height="2.4" fill="#ff0000"/>
<rect x="1261" y="334.8" width="4" height="2.4" fill="#ff0000"/>
<rect x="1312.5" y="334.8" width="4" height="2.4" fill="#ff0000"/>
<rect x="1426" y="334.3" width="4" height="2.4" fill="#ff0000"/>
<rect x="1361" y="330" width="45" height="6.8" fill="#ff0000"/>
<ellipse cx="1407" cy="333.4" rx="2" ry="3.4" fill="#ff0000" stroke="#ff0000" stroke-width="1"/>
<ellipse cx="1361.5" cy="333.4" rx="1.5" ry="3" fill="#fff" stroke="#ff0000" stroke-width="1"/>
<ellipse cx="1385.5" cy="333.4" rx="1.5" ry="3" fill="#fff" stroke="#ff0000" stroke-width="1"/>
<rect x="1493" y="332" width="37" height="6" fill="#ff0000"/>
<path d="M1493 332 L1490 335 L1493 338Z" fill="#ff0000"/>
<path d="M901 691.3 L913 694.8" stroke="#ff0000" stroke-width="5.5" fill="none" stroke-linecap="butt"/>
<ellipse cx="901" cy="691.3" rx="1.6" ry="2.75" fill="#fff" stroke="#ff0000" stroke-width="1"/>
<path d="M911 687.3 L917 689" stroke="#ff0000" stroke-width="2.4" fill="none"/>
<path d="M982 670.5 L993 673.8" stroke="#ff0000" stroke-width="5.5" fill="none" stroke-linecap="butt"/>
<ellipse cx="982" cy="670.5" rx="1.6" ry="2.75" fill="#fff" stroke="#ff0000" stroke-width="1"/>
<path d="M990 667.3 L996 669" stroke="#ff0000" stroke-width="2.4" fill="none"/>
<path d="M1052 652.5 L1064 655.5" stroke="#ff0000" stroke-width="5" fill="none" stroke-linecap="butt"/>
<ellipse cx="1052" cy="652.5" rx="1.6" ry="2.5" fill="#fff" stroke="#ff0000" stroke-width="1"/>
<path d="M1058 649 L1064 650.5" stroke="#ff0000" stroke-width="2" fill="none"/>
<path d="M1056 750.5 L1070 747.5" stroke="#ff0000" stroke-width="5.5" fill="none" stroke-linecap="butt"/>
<ellipse cx="1064" cy="746.5" rx="2.5" ry="2" fill="none" stroke="#ff0000" stroke-width="1.5"/>
<path d="M1094 762 L1109 758.5" stroke="#ff0000" stroke-width="5.5" fill="none" stroke-linecap="butt"/>
<ellipse cx="1104" cy="757" rx="3" ry="2.5" fill="none" stroke="#ff0000" stroke-width="1.5"/>
<path d="M1485 755 L1501 759.5" stroke="#ff0000" stroke-width="5.5" fill="none" stroke-linecap="butt"/>
<ellipse cx="1481" cy="754" rx="3.5" ry="2.5" fill="#fff" stroke="#ff0000" stroke-width="1.5" transform="rotate(20 1481 754)"/>
<path d="M1501 753 L1513 755.5" stroke="#ff0000" stroke-width="2.6" fill="none"/>
<path d="M1424 788 L1440 793" stroke="#ff0000" stroke-width="6" fill="none" stroke-linecap="butt"/>
<ellipse cx="1420.5" cy="787" rx="3" ry="2.5" fill="#fff" stroke="#ff0000" stroke-width="1.5" transform="rotate(20 1420.5 787)"/>
<path d="M1441 785.5 L1452 788.5" stroke="#ff0000" stroke-width="2.4" fill="none"/>
<path d="M1370 823.5 L1382 827.5" stroke="#ff0000" stroke-width="2.2" fill="none"/>
<ellipse cx="868.5" cy="402.5" rx="5" ry="8.5" fill="none" stroke="#ff0000" stroke-width="1.7"/>
<ellipse cx="870" cy="402.5" rx="3" ry="6.5" fill="none" stroke="#ff0000" stroke-width="1"/>
<rect x="873" y="389.5" width="2" height="2" fill="#ff0000"/>
<rect x="874" y="415" width="2" height="2" fill="#ff0000"/>
<rect x="886.5" y="394" width="2" height="1" fill="#ff0000"/>
<rect x="886.5" y="410" width="2" height="1" fill="#ff0000"/>
<ellipse cx="879.5" cy="656.5" rx="5" ry="8.5" fill="none" stroke="#ff0000" stroke-width="1.7"/>
<ellipse cx="881" cy="656.5" rx="3" ry="6.5" fill="none" stroke="#ff0000" stroke-width="1"/>
<rect x="883.615" y="643.828" width="2" height="2" fill="#ff0000"/>
<rect x="884.545" y="667.451" width="2" height="2" fill="#ff0000"/>
<rect x="896.17" y="646.793" width="2" height="1" fill="#ff0000"/>
<rect x="896.17" y="661.673" width="2" height="1" fill="#ff0000"/>
<path d="M539.5 826 L539.5 866" stroke="#00ff00" stroke-width="1" fill="none"/>
<path d="M535 826.5 L539.5 819.5 L544 826.5Z" fill="#00ff00"/>
<path d="M539.5 866.5 L546 866.5 L568 870.2" stroke="#ff0000" stroke-width="1" fill="none"/>
<circle cx="570.5" cy="870.5" r="3.4" fill="#ff0000"/>
<path d="M539.5 866.5 L534 866.5 L514 870.8" stroke="#0000ff" stroke-width="1" fill="none"/>
<circle cx="511.5" cy="871.5" r="3.4" fill="#0000ff"/>
<text x="544" y="815.3" fill="#00ff00" class="ax">Y</text><text x="582.5" y="873.3" fill="#ff0000" class="ax">X</text><text x="511.5" y="873.3" fill="#0000ff" class="ax">Z</text>
</svg>
</main>
<footer id="status-bar" class="rg">
<div class="a" style="left:0;top:966px;width:1920px;height:1px;background:#454545"></div>
<div class="a" style="left:0;top:967px;width:1920px;height:32px;background:#555"></div>
<div class="a" style="left:0;top:999px;width:1920px;height:2px;background:#1c1c14"></div>
<div class="a" style="left:1867px;top:972px;width:24px;height:20px;background:#3c3c3c"></div>
<svg class="a" style="left:1790px;top:967px" width="130" height="32" viewBox="1790 967 130 32">
<rect x="1799" y="981" width="16" height="4" fill="#c8c8c8"/><path d="M1801 981 v2 M1803.5 981 v2 M1806 981 v2 M1808.5 981 v2 M1811 981 v2 M1813.5 981 v2" stroke="#555" stroke-width="0.7"/>
<path d="M1807 981 Q1811 977 1815 980 V981 Z" fill="#b8b8b8"/><path d="M1805 985 h4 v3 h-4 z M1809 987 Q1812 988 1814.5 986.5" fill="#c8c8c8" stroke="#c8c8c8" stroke-width="0.8"/>
<path d="M1823 981 H1839 M1831 973 V988.5" stroke="#9a9a9a" stroke-width="2.2" fill="none"/>
<path d="M1847 975 h15 M1847 978 h15 M1847 981 h15 M1847 984 h15 M1847 987.3 h15 M1849 974 v14 M1852 974 v14 M1855 974 v14 M1858 974 v14 M1861 974 v14" stroke="#9a9a9a" stroke-width="1" fill="none"/>
<rect x="1871.5" y="973.5" width="14" height="14" fill="none" stroke="#b0b0b0" stroke-width="1"/><path d="M1871.5 976.5 h14 M1878.5 973.5 v14" stroke="#b0b0b0" stroke-width="1" fill="none"/><path d="M1871.5 987 h14" stroke="#b0b0b0" stroke-width="1.5"/>
<path d="M1900 988 L1907 974.5 L1914 988 Z" fill="#c8c8c8" stroke="#c8c8c8" stroke-width="1.5" stroke-linejoin="round"/>
</svg>
<span class="t" id="t50" style="left:8.9px;top:975.0px;font-size:13px;color:#e8e8e8;letter-spacing:-0.296px;">Este Produto está Licenciado para : Bitmind - Soluções para a Indústria,</span>
<span class="t" id="t51" style="left:1729.2px;top:975.0px;font-size:13px;color:#e8e8e8;letter-spacing:-0.072px;">mm</span>
<span class="t" id="t52" style="left:1762.9px;top:975.0px;font-size:13px;color:#e8e8e8;letter-spacing:-1.004px;">1.01</span>
</footer>
</body></html>
